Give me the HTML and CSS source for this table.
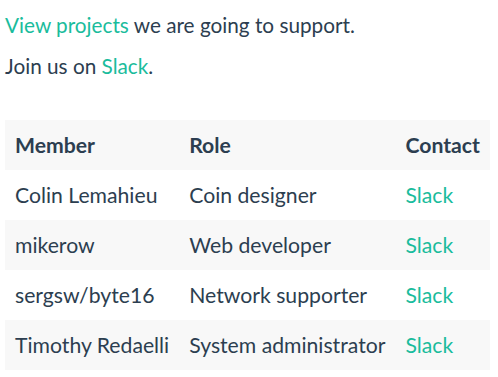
FILE: index.html
```html
<!DOCTYPE html>
<html>
<head>
<meta charset="utf-8">
<link rel="stylesheet" href="styles.css">
</head>
<body>
<div class="page">
  <p class="line"><a class="link" href="#">View projects</a> we are going to support.</p>
  <p class="line">Join us on <a class="link" href="#">Slack</a>.</p>
  <table class="team">
    <thead>
      <tr><th>Member</th><th>Role</th><th>Contact</th></tr>
    </thead>
    <tbody>
      <tr><td>Colin Lemahieu</td><td>Coin designer</td><td><a class="link" href="#">Slack</a></td></tr>
      <tr><td>mikerow</td><td>Web developer</td><td><a class="link" href="#">Slack</a></td></tr>
      <tr><td>sergsw/byte16</td><td>Network supporter</td><td><a class="link" href="#">Slack</a></td></tr>
      <tr><td>Timothy Redaelli</td><td>System administrator</td><td><a class="link" href="#">Slack</a></td></tr>
    </tbody>
  </table>
</div>
</body>
</html>
```
FILE: styles.css
```css
html, body {
  margin: 0;
  padding: 0;
  background: #fff;
}
.page {
  padding: 10px 5px 0 5px;
  font-family: Lato, "Liberation Sans", sans-serif;
  font-size: 20.75px;
  color: #2c3e50;
}
.line {
  margin: 0 0 11px 0;
  line-height: 30px;
}
.link {
  color: #1abc9c;
  text-decoration: none;
}
.team {
  margin-top: 39px;
  border-collapse: collapse;
  border-spacing: 0;
  font-size: 21.2px;
}
.team th, .team td {
  padding: 10px;
  line-height: 30px;
  text-align: left;
  white-space: nowrap;
}
.team th {
  font-weight: bold;
}
.team thead tr {
  background: #f8f8f8;
}
.team tbody tr:nth-child(even) {
  background: #f8f8f8;
}
```
